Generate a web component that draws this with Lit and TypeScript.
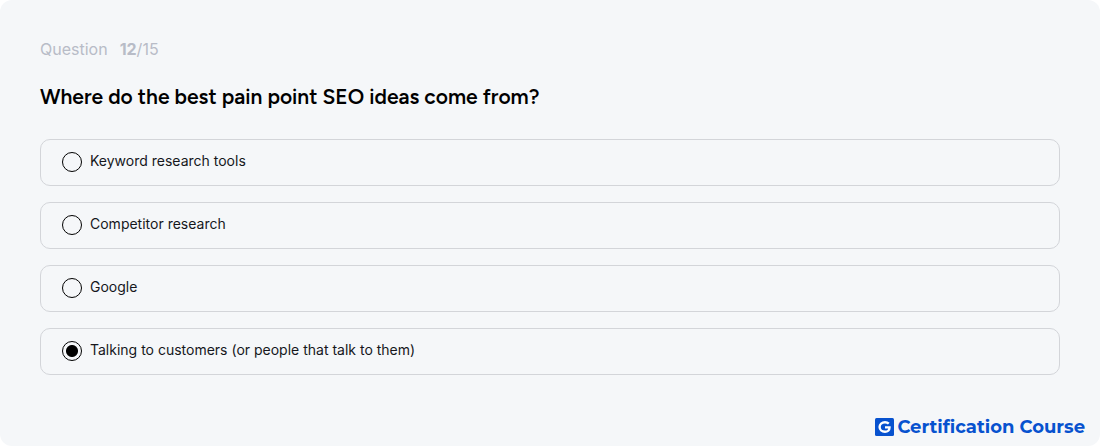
import { LitElement, html, css } from "lit";
import { customElement, state } from "lit/decorators.js";

@customElement("app-root")
export class AppRoot extends LitElement {
  static styles = css`
    :host {
      display: block;
      background: #fff;
      font-family: Inter, "Liberation Sans", sans-serif;
      color: #15171c;
    }
    .card {
      box-sizing: border-box;
      display: flex;
      flex-direction: column;
      min-height: 100vh;
      padding: 39px 40px 8px;
      border-radius: 12px;
      background: #f5f7f9;
    }
    .progress {
      display: flex;
      gap: 12px;
      margin: 0;
      font-size: 16px;
      line-height: 20px;
      color: #b8bcc7;
    }
    .current {
      font-weight: 700;
    }
    .quiz {
      margin: 0;
      padding: 0;
      border: 0;
      min-width: 0;
    }
    .title {
      margin: 24px 0 28px;
      font-family: Figtree, Lato, sans-serif;
      font-size: 21px;
      line-height: 28px;
      font-weight: 600;
      color: #000;
    }
    .options {
      display: grid;
      gap: 16px;
    }
    .option {
      box-sizing: border-box;
      display: flex;
      align-items: center;
      gap: 8px;
      min-height: 47px;
      padding: 0 21px 1px;
      border: 1px solid #d3d5d9;
      border-radius: 10px;
      font-size: 14px;
      line-height: 20px;
      cursor: pointer;
    }
    .text {
      padding-bottom: 2px;
    }
    .radio {
      appearance: none;
      flex: none;
      box-sizing: border-box;
      width: 20px;
      height: 20px;
      margin: 0;
      border: 1px solid #000;
      border-radius: 50%;
    }
    .radio:checked {
      background: radial-gradient(circle, #000 5.5px, transparent 6.5px);
    }
    .brand {
      display: flex;
      align-items: center;
      justify-content: flex-end;
      gap: 3px;
      margin: auto -25px 0 0;
      font-family: Montserrat, Inter, sans-serif;
      font-size: 18px;
      line-height: 22px;
      font-weight: 700;
      color: #0752cf;
    }
    .logo {
      display: block;
      width: 19px;
      height: 18px;
    }
  `;

  @state() private selected = 3;

  private answers = [
    "Keyword research tools",
    "Competitor research",
    "Google",
    "Talking to customers (or people that talk to them)",
  ];

  render() {
    return html`
      <main class="card">
        <p class="progress">
          <span>Question</span>
          <span><span class="current">12</span>/15</span>
        </p>
        <h1 class="title" id="question">Where do the best pain point SEO ideas come from?</h1>
        <fieldset class="quiz" aria-labelledby="question">
          <div class="options">
            ${this.answers.map(
              (answer, i) => html`
                <label class="option">
                  <input
                    class="radio"
                    type="radio"
                    name="answer"
                    .checked=${i === this.selected}
                    @change=${() => (this.selected = i)}
                  />
                  <span class="text">${answer}</span>
                </label>
              `
            )}
          </div>
        </fieldset>
        <footer class="brand">
          <svg class="logo" viewBox="0 0 19 18" aria-hidden="true">
            <rect width="19" height="18" rx="1.5" fill="#0752cf" />
            <path
              d="M13.800 5.700C12.800 4.700 11.500 4.200 10 4.200C6.900 4.200 4.600 6.200 4.600 9C4.600 11.800 6.900 13.800 10 13.800C12.700 13.800 14.500 12.200 14.500 9.400H10"
              fill="none"
              stroke="#fff"
              stroke-width="2.400"
            />
          </svg>
          <span>Certification Course</span>
        </footer>
      </main>
    `;
  }
}
